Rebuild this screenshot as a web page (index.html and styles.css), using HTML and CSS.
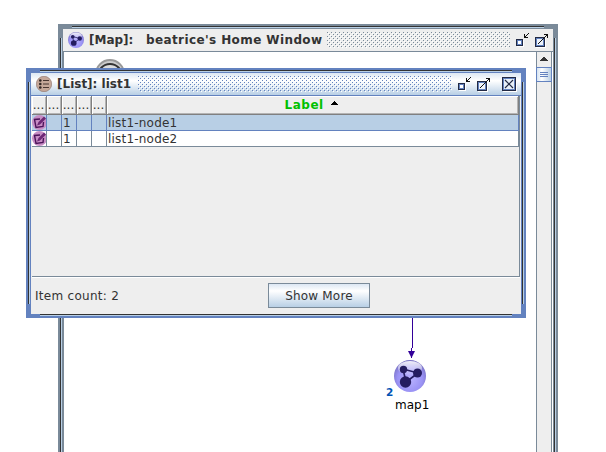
FILE: index.html
```html
<!DOCTYPE html>
<html lang="en">
<head>
<meta charset="utf-8">
<title>beatrice's Home Window</title>
<link rel="stylesheet" href="styles.css">
</head>
<body>
<svg width="0" height="0" class="defs">
  <defs>
    <radialGradient id="ball" cx=".5" cy=".6" r=".6"><stop offset="0" stop-color="#b9b3ff"/><stop offset=".65" stop-color="#9b93f5"/><stop offset="1" stop-color="#7770c0"/></radialGradient>
    <linearGradient id="shine" x2="0" y2="1"><stop offset="0" stop-color="#fff" stop-opacity=".9"/><stop offset="1" stop-color="#fff" stop-opacity=".1"/></linearGradient>
    <pattern id="bumpGrey" width="4" height="4" patternUnits="userSpaceOnUse"><path fill="#fff" d="M1 1h1v1h-1zM3 3h1v1h-1z"/><path fill="#7a8a99" d="M0 0h1v1h-1zM2 2h1v1h-1z"/></pattern>
    <pattern id="bumpBlue" width="4" height="4" patternUnits="userSpaceOnUse"><path fill="#fff" d="M1 1h1v1h-1zM3 3h1v1h-1z"/><path fill="#6382bf" d="M0 0h1v1h-1zM2 2h1v1h-1z"/></pattern>
    <symbol id="mapball" viewBox="0 0 32 32">
      <circle cx="16" cy="16" r="16" fill="url(#ball)"/>
      <ellipse cx="16" cy="8" rx="12" ry="7" fill="url(#shine)"/>
      <path fill="none" stroke="#241c60" stroke-width="1.6" d="M9 9L24 13L12 22Z"/>
      <g fill="#241c60"><circle cx="9.500" cy="9.500" r="3.700"/><circle cx="23.500" cy="13" r="4.500"/><circle cx="11.500" cy="22" r="5.700"/></g>
    </symbol>
    <symbol id="minimize" viewBox="0 0 16 16" shape-rendering="crispEdges">
      <path fill="#fff" d="M3 8h7v7h-7z"/><path fill="#222a44" d="M2 7h7v7h-7z"/><path fill="#6382bf" d="M3 8h5v5h-5z"/><path fill="#fff" d="M4 9h3v3h-3z"/>
      <path fill="#111" d="M10 2h1v4h-1zM10 5h4v1h-4zM11 4h1v1h-1zM12 3h1v1h-1zM13 2h1v1h-1zM14 1h1v1h-1z"/>
    </symbol>
    <symbol id="maximize" viewBox="0 0 16 16" shape-rendering="crispEdges">
      <path fill="#fff" d="M3 6h10v10h-10z"/><path fill="#222a44" d="M2 5h10v10h-10z"/><path fill="#6382bf" d="M3 6h8v8h-8z"/><path fill="#eef3fa" d="M4 7h6v6h-6z"/>
      <path fill="#111" d="M5 11h1v1h-1zM6 10h1v1h-1zM7 9h1v1h-1zM8 8h1v1h-1zM9 7h1v1h-1zM10 6h1v1h-1zM11 5h1v1h-1zM12 4h1v1h-1zM13 3h1v1h-1zM11 2h4v1h-4zM14 2h1v4h-1z"/>
    </symbol>
    <symbol id="edit" viewBox="0 0 15 15">
      <circle cx="7.500" cy="7.500" r="7.500" fill="#c78dc4"/><path fill="none" stroke="#4d145a" stroke-width="1.400" d="M8 4L2.500 4.500L4 12.500L11 11.500L11.500 7"/><path fill="#6d2775" d="M5 10.500L6.500 7L12 1.500L14 3.500L8 9.500z"/>
    </symbol>
  </defs>
</svg>
<main class="desktop">
  <section class="window map-window">
    <header class="titlebar">
      <svg class="title-icon"><use href="#mapball"/></svg>
      <h1 class="map-title">[Map]:&nbsp;&nbsp; <span>beatrice's Home Window</span></h1>
      <svg class="bumps"><rect width="100%" height="100%" fill="url(#bumpGrey)"/></svg>
      <svg class="control min"><use href="#minimize"/></svg>
      <svg class="control"><use href="#maximize"/></svg>
    </header>
    <div class="map-body">
      <div class="canvas">
        <svg class="hidden-node" width="30" height="30"><circle cx="15" cy="15" r="14" fill="#ccc" stroke="#999" stroke-width="2"/><circle cx="15" cy="17" r="12" fill="#ddd" stroke="#333" stroke-width="2"/></svg>
        <svg class="link" width="10" height="48"><path fill="none" stroke="#330099" d="M5.500 0V33M4.500 33V43" shape-rendering="crispEdges"/><path fill="#330099" d="M1 36H8L4.500 43z"/></svg>
        <svg class="node"><use href="#mapball"/></svg>
        <span class="badge">2</span>
        <span class="node-label">map1</span>
      </div>
      <div class="scrollbar">
        <div class="arrow"><svg width="8" height="5" shape-rendering="crispEdges"><path fill="#333" d="M3 0h2v1h-2zM2 1h4v1h-4zM1 2h6v1h-6zM0 3h8v1h-8z"/></svg></div>
        <div class="thumb"><i></i><i></i><i></i></div>
      </div>
    </div>
  </section>
  <section class="window list-window">
    <header class="titlebar">
      <svg class="title-icon" viewBox="0 0 16 16"><circle cx="8" cy="8" r="7.700" fill="#c5a798" stroke="#8b7168" stroke-width=".6"/><path stroke="#493631" stroke-width="1.200" d="M7 4.500h6M7 8h6M7 11.500h6"/><g fill="#302522"><circle cx="4.300" cy="4.500" r="1.300"/><circle cx="4.300" cy="8" r="1.300"/><circle cx="4.300" cy="11.500" r="1.300"/></g></svg>
      <h2 class="list-title">[List]: list1</h2>
      <svg class="bumps"><rect width="100%" height="100%" fill="url(#bumpBlue)"/></svg>
      <svg class="control min"><use href="#minimize"/></svg>
      <svg class="control"><use href="#maximize"/></svg>
      <svg class="control close" viewBox="0 0 16 16" shape-rendering="crispEdges"><path fill="#fff" d="M2 2h14v14h-14z"/><path fill="#222a44" d="M1 1h14v14h-14z"/><path fill="#6382bf" d="M2 2h12v12h-12z"/><path fill="#e8f0f8" d="M3 3h10v10h-10z"/><path stroke="#222a44" stroke-width="1.200" d="M4 4L12 12M12 4L4 12" shape-rendering="auto"/></svg>
    </header>
    <div class="list-body">
      <div class="table">
        <div class="row head"><span>...</span><span>...</span><span>...</span><span>...</span><span>...</span><span class="sort">Label <svg width="8" height="4" shape-rendering="crispEdges"><path d="M3 0h1v1h-1zM2 1h3v1h-3zM1 2h5v1h-5zM0 3h7v1h-7z"/></svg></span></div>
        <div class="row selected"><span><svg class="edit"><use href="#edit"/></svg></span><span></span><span>1</span><span></span><span></span><span>list1-node1</span></div>
        <div class="row"><span><svg class="edit"><use href="#edit"/></svg></span><span></span><span>1</span><span></span><span></span><span>list1-node2</span></div>
      </div>
      <footer class="footer"><span class="count">Item count: 2</span><button>Show More</button></footer>
    </div>
  </section>
</main>
</body>
</html>
```
FILE: styles.css
```css
* { box-sizing: border-box; }
body { margin: 0; background: #fff; font: 12px/16px "DejaVu Sans", sans-serif; color: #333; overflow: hidden; }
.defs { position: absolute; }
.desktop { position: relative; width: 606px; height: 452px; overflow: hidden; }
.window { position: absolute; display: flex; flex-direction: column; width: 500px; border: 5px solid #7a8a99; }
.window::before, .window::after { content: ""; position: absolute; z-index: -1; pointer-events: none; }
.window { isolation: isolate; }
.window::before { left: 9px; right: 9px; top: -3px; bottom: -3px; background: linear-gradient(#333 1px, #b8cfe5 1px 2px, transparent 2px calc(100% - 2px), #333 calc(100% - 2px) calc(100% - 1px), #b8cfe5 calc(100% - 1px)); }
.window::after { top: 9px; bottom: 9px; left: -3px; right: -3px; background: linear-gradient(90deg, #333 1px, #b8cfe5 1px 2px, transparent 2px calc(100% - 2px), #333 calc(100% - 2px) calc(100% - 1px), #b8cfe5 calc(100% - 1px)); }
.map-window { left: 58px; top: 24px; height: 500px; }
.list-window { left: 26px; top: 68px; height: 250px; border-color: #6382bf; }
.titlebar { display: flex; align-items: center; height: 23px; flex: none; padding-left: 5px; background: #eee; border-bottom: 1px solid #7a8a99; }
.list-window .titlebar { background: linear-gradient(#dce7f3, #fff 35%, #b8cfe5); border-color: #6382bf; }
.title-icon { width: 16px; height: 16px; flex: none; margin-right: 5px; }
h1, h2 { margin: 0; font-size: 12px; font-weight: bold; white-space: pre; flex: none; }
.map-title { width: 238px; }
.map-title span { letter-spacing: .4px; }
.list-title { width: 81px; }
.bumps { flex: 1; height: 16px; min-width: 0; margin-right: 4px; }
.control { width: 16px; height: 16px; flex: none; margin-right: 4px; }
.control.min { margin-right: 3px; }
.control.close { margin: 0 4px 0 6px; }
.map-body { display: flex; flex: 1; background: #fff; border-left: 1px solid #7a8a99; }
.canvas { flex: 1; position: relative; color: #000; }
.hidden-node { position: absolute; left: 31px; top: 7px; }
.link { position: absolute; left: 343px; top: 263px; }
.node { position: absolute; left: 330px; top: 308px; width: 32px; height: 32px; }
.badge { position: absolute; left: 322px; top: 332px; color: #0053b5; font-weight: bold; font-size: 10.5px; }
.node-label { position: absolute; left: 331px; top: 345px; }
.scrollbar { width: 16px; margin-right: 1px; background: #eee; border: solid #7a8a99; border-width: 0 1px; }
.arrow { height: 15px; display: flex; align-items: center; justify-content: center; }
.thumb { height: 15px; margin: 0 -1px; border: 1px solid #6382bf; background: linear-gradient(90deg, #d5e3f1, #fff 35%, #b8cfe5); display: flex; flex-direction: column; gap: 1px; align-items: center; justify-content: center; }
.thumb i { width: 8px; height: 1px; background: #6382bf; }
.list-body { flex: 1; background: #eee; padding: 0 1px 0 1px; }
.table { height: 181px; border-right: 1px solid #7a8a99; border-bottom: 1px solid #7a8a99; }
.row { display: grid; grid-template-columns: repeat(5, 15px) 1fr; height: 16px; background: #fff; letter-spacing: .2px; }
.row span { overflow: hidden; line-height: 17px; border-right: 1px solid #7a8a99; border-bottom: 1px solid #7a8a99; padding-left: 1px; white-space: nowrap; }
.row.selected { background: #b8cfe5; }
.row.selected span { border-color: #6382bf; }
.row.head { height: 19px; background: #eee; letter-spacing: 0; }
.row.head span { border: solid #808080; border-width: 0 1px 1px 0; box-shadow: inset 1px 1px #fff, inset -1px -1px #b4b4b4; line-height: 18px; text-align: center; padding: 0 1px 0 0; }
.row .sort { color: #00c000; font-weight: bold; letter-spacing: .5px; }
.sort svg { margin: 0 0 4px 3px; }
.edit { width: 15px; height: 15px; display: block; margin-left: -1px; }
.footer { display: flex; align-items: center; height: 37px; border-top: 1px solid #fff; padding-left: 3px; }
.count { width: 233px; letter-spacing: .28px; }
button { width: 102px; height: 25px; margin-top: -2px; padding: 1px 0 0; border: 1px solid #7a8a99; background: linear-gradient(#dce7f3, #fff 30%, #b8cfe5); font: inherit; color: #333; letter-spacing: .2px; }
```
